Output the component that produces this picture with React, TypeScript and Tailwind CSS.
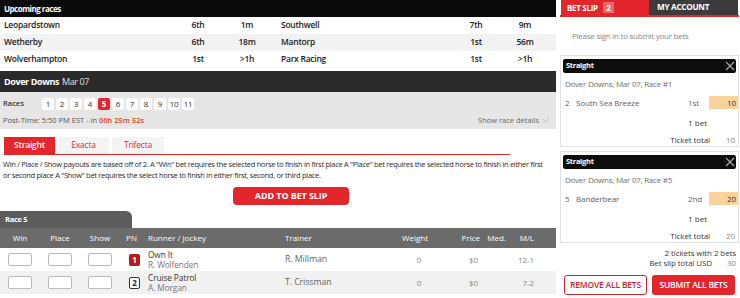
import React from "react";

const upcoming = [
  ["Leopardstown", "6th", "1m", "Southwell", "7th", "9m"],
  ["Wetherby", "6th", "18m", "Mantorp", "1st", "56m"],
  ["Wolverhampton", "1st", ">1h", "Parx Racing", "1st", ">1h"],
];

const runners = [
  { pn: 1, name: "Own It", jockey: "R. Wolfenden", trainer: "R. Millman", ml: "12-1" },
  { pn: 2, name: "Cruise Patrol", jockey: "A. Morgan", trainer: "T. Crissman", ml: "7-2" },
];

function CloseIcon() {
  return (
    <svg width="10" height="10" viewBox="0 0 10 10" className="stroke-[#aaa]">
      <path d="M1 1 L9 9 M9 1 L1 9" strokeWidth="1.1" />
    </svg>
  );
}

function Ticket({ race, pn, horse, pos, amount }: { race: string; pn: number; horse: string; pos: string; amount: number }) {
  return (
    <div className="border border-[#e2e2e2] bg-white px-[2px] pt-[3px]">
      <div className="flex h-[14px] items-center justify-between rounded-[2px] bg-[#0d0d0d] pl-[3px] pr-[1px]">
        <span className="text-[7.5px] font-bold tracking-[-0.3px] text-white">Straight</span>
        <CloseIcon />
      </div>
      <div className="mt-[5px] pl-[2px] text-[8px] leading-[12px] tracking-[-0.25px] text-[#6f6f6f]">{`Dover Downs, Mar 07, Race #${race}`}</div>
      <div className="mt-[6px] flex h-[13px] items-center text-[8px] tracking-[-0.1px] text-[#5f5f5f]">
        <span className="w-[13px] pl-[2px]">{pn}</span>
        <span className="flex-1">{horse}</span>
        <span className="w-[21px]">{pos}</span>
        <span className="-mr-[2px] h-[13px] w-[29px] bg-[#fbd29b] pr-[2px] text-right leading-[13px] text-[#333]">{amount}</span>
      </div>
      <div className="mt-[8px] pr-[29px] text-right text-[8px] leading-[12px] text-[#3a3a3a]">1 bet</div>
      <div className="mt-[5px] flex justify-end text-[8px] leading-[12px] tracking-[-0.1px]">
        <span className="text-[#3a3a3a]">Ticket total</span>
        <span className="w-[26px] pr-[1px] text-right text-[#888]">{amount}</span>
      </div>
    </div>
  );
}

export default function App() {
  return (
    <div className="flex h-[298px] w-[740px] overflow-hidden bg-white font-['Open_Sans',sans-serif]">
      {/* left column */}
      <div className="w-[556px]">
        <div className="flex h-[17px] items-center bg-[#0a0a0a] pl-[4px] text-[8px] font-bold tracking-[-0.5px] text-white">
          Upcoming races
        </div>
        {upcoming.map((r, i) => (
          <div key={i} className={`flex h-[17px] items-center text-[8.5px] font-semibold tracking-[-0.25px] text-[#1a1a1a] ${i === 1 ? "bg-[#f2f2f2]" : "bg-white"}`}>
            <span className="w-[180px] pl-[4px]">{r[0]}</span>
            <span className="w-[36px] text-center">{r[1]}</span>
            <span className="w-[62px] text-center">{r[2]}</span>
            <span className="w-[180px] pl-[3px]">{r[3]}</span>
            <span className="w-[36px] text-center">{r[4]}</span>
            <span className="w-[62px] text-center">{r[5]}</span>
          </div>
        ))}
        <div className="h-[3px] bg-white" />
        <div className="flex h-[21px] items-center gap-[3px] bg-[#2a2a2a] pl-[4px] text-[9px] tracking-[-0.4px] text-white">
          <span className="font-bold">Dover Downs</span>
          <span className="text-[#e0e0e0]">Mar 07</span>
        </div>
        <div className="h-[37px] bg-[#e6e6e6] px-[3px] pt-[6px]">
          <div className="flex h-[12px] items-center">
            <span className="w-[39px] text-[7.5px] font-semibold text-[#333]">Races</span>
            <div className="flex gap-[2px]">
              {[1, 2, 3, 4, 5, 6, 7, 8, 9, 10, 11].map((n) => (
                <span
                  key={n}
                  className={`flex h-[12px] w-[12px] items-center justify-center rounded-[2px] text-[8px] tracking-[-0.3px] ${n === 5 ? "bg-[#e3262c] font-bold text-white" : "bg-white text-[#333]"}`}
                >
                  {n}
                </span>
              ))}
            </div>
          </div>
          <div className="mt-[4px] flex items-center justify-between text-[7.5px] leading-[12px] text-[#555]">
            <span>
              Post-Time: 5:50 PM EST - in <span className="font-semibold text-[#e8431c]">06h 25m 52s</span>
            </span>
            <span className="flex items-center gap-[3px] pr-[4px] text-[#666]">
              Show race details
              <svg width="7" height="5" viewBox="0 0 7 5"><path d="M0.5 0.5 L3.5 4 L6.5 0.5" fill="none" stroke="#bbb" strokeWidth="0.9" /></svg>
            </span>
          </div>
        </div>

        <div className="ml-[4px] mt-[8px] flex w-[506px] gap-[3px] border-b border-[#e3262c]">
          <span className="flex h-[17px] w-[51px] items-center justify-center bg-[#e3262c] text-[8.5px] font-semibold tracking-[-0.2px] text-white">Straight</span>
          <span className="flex h-[17px] w-[51px] items-center justify-center bg-[#f4f4f4] text-[8.5px] tracking-[-0.2px] text-[#e3262c]">Exacta</span>
          <span className="flex h-[17px] w-[52px] items-center justify-center bg-[#f4f4f4] text-[8.5px] tracking-[-0.2px] text-[#e3262c]">Trifecta</span>
        </div>
        <p className="mt-[4px] pl-[3px] pr-[9px] text-[7.5px] leading-[11px] tracking-[-0.3px] text-[#2a2a2a]">
          Win / Place / Show payouts are based off of 2. A "Win" bet requires the selected horse to finish in first place A "Place" bet requires the selected horse to finish in either first or second place A "Show" bet requires the select horse to finish in either first, second, or third place.
        </p>
        <div className="mt-[6px] flex justify-center pl-[26px]">
          <button className="h-[18px] w-[116px] rounded-[4px] bg-[#e3262c] text-[9px] font-bold tracking-[-0.1px] text-white">ADD TO BET SLIP</button>
        </div>

        <div className="mt-[6px] flex h-[17px] w-[132px] items-center rounded-tr-[6px] bg-[#5c5c5c] pl-[5px] text-[7.5px] font-bold tracking-[-0.3px] text-white">
          Race 5
        </div>
        <div className="flex h-[20px] items-center bg-[#6b6b6b] text-[8px] text-white">
          <span className="w-[40px] text-center">Win</span>
          <span className="w-[40px] text-center">Place</span>
          <span className="w-[40px] text-center">Show</span>
          <span className="w-[23px] text-center">PN</span>
          <span className="w-[137px] pl-[5px]">Runner / Jockey</span>
          <span className="w-[115px] pl-[5px]">Trainer</span>
          <span className="w-[40px] text-center">Weight</span>
          <span className="w-[45px] text-right">Price</span>
          <span className="w-[26px] text-right">Med.</span>
          <span className="w-[36px] pr-[8px] text-right">M/L</span>
        </div>
        {runners.map((r, i) => (
          <div key={r.pn} className={`flex h-[23px] items-center text-[8px] tracking-[-0.1px] ${i === 1 ? "bg-[#f1f1f1]" : "bg-white"}`}>
            {[0, 1, 2].map((k) => (
              <span key={k} className="flex w-[40px] justify-center">
                <span className="h-[13px] w-[24px] rounded-[2px] border border-[#bbb] bg-white" />
              </span>
            ))}
            <span className="flex w-[23px] justify-center pl-[6px]">
              {r.pn === 1 ? (
                <span className="flex h-[12px] w-[11px] items-center justify-center rounded-[2px] bg-[#b81a1a] text-[8px] font-bold text-white">1</span>
              ) : (
                <span className="flex h-[12px] w-[11px] items-center justify-center rounded-[2px] border border-[#333] bg-white text-[8px] font-bold text-[#222]">2</span>
              )}
            </span>
            <span className="flex w-[137px] flex-col pl-[5px] text-[8.3px] leading-[10px]">
              <span className="text-[#333]">{r.name}</span>
              <span className="text-[#777]">{r.jockey}</span>
            </span>
            <span className="w-[115px] pl-[5px] text-[8.8px] text-[#666]">{r.trainer}</span>
            <span className="w-[40px] pl-[8px] text-center text-[#888]">0</span>
            <span className="w-[45px] pr-[2px] text-right text-[#888]">$0</span>
            <span className="w-[26px]" />
            <span className="w-[36px] pr-[8px] text-right text-[#888]">{r.ml}</span>
          </div>
        ))}
      </div>

      {/* right column */}
      <div className="ml-[4px] w-[179px]">
        <div className="flex h-[17px] border-b-[2px] border-[#e3262c] pl-[1px]">
          <div className="flex w-[88px] items-center gap-[5px] bg-[#e3262c] pl-[6px] text-[8px] font-bold tracking-[-0.3px] text-white">
            BET SLIP
            <span className="flex h-[11px] w-[11px] items-center justify-center bg-[#ee6a6a] text-[8px] font-bold">2</span>
          </div>
          <div className="flex w-[89px] items-center bg-[#3b3b3b] pl-[8px] text-[8.2px] font-bold tracking-[-0.3px] text-white">MY ACCOUNT</div>
        </div>
        <div className="pl-[12px] pt-[13px] text-[8px] leading-[12px] tracking-[-0.25px] text-[#888]">Please sign in to submit your bets</div>
        <div className="mt-[13px] flex flex-col gap-[4px]">
          <Ticket race="1" pn={2} horse="South Sea Breeze" pos="1st" amount={10} />
          <Ticket race="5" pn={5} horse="Banderbear" pos="2nd" amount={20} />
        </div>
        <div className="mt-[5px] pr-[3px] text-right text-[8px] leading-[10px] tracking-[-0.1px] text-[#3a3a3a]">
          <div>2 tickets with 2 bets</div>
          <div className="flex justify-end">
            <span>Bet slip total USD</span>
            <span className="w-[24px] text-right text-[#888]">30</span>
          </div>
        </div>
        <div className="mt-[7px] flex gap-[5px] pl-[4px]">
          <button className="h-[20px] w-[83px] rounded-[3px] border border-[#c9262c] bg-white text-[8.5px] font-semibold tracking-[-0.2px] text-[#c9262c]">REMOVE ALL BETS</button>
          <button className="h-[20px] w-[83px] rounded-[3px] bg-[#e3262c] text-[8.5px] font-semibold tracking-[-0.2px] text-white">SUBMIT ALL BETS</button>
        </div>
      </div>
    </div>
  );
}
